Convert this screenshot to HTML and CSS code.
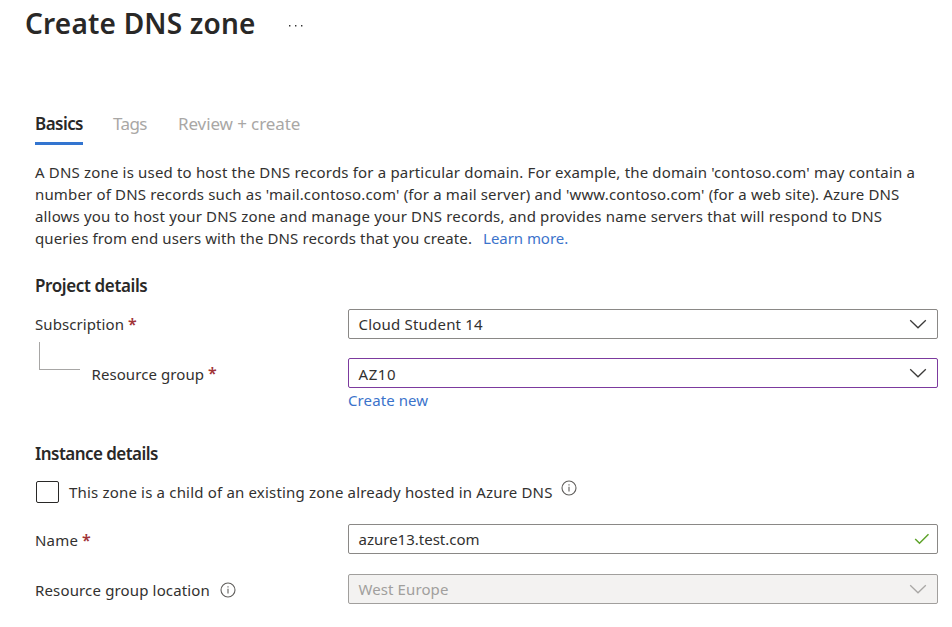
FILE: index.html
```html
<!DOCTYPE html>
<html lang="en">
<head>
<meta charset="utf-8">
<title>Create DNS zone</title>
<link rel="stylesheet" href="styles.css">
</head>
<body>
<header class="header">
  <h1 class="title"><span>Create DNS zone</span></h1>
  <svg class="more" width="16" height="4" viewBox="0 0 16 4"><path d="M1 1h1.4v1.4H1zM7 1h1.4v1.4H7zM13 1h1.4v1.4H13z" fill="#333"/></svg>
</header>
<main class="content">
  <nav class="tabs">
    <a class="tab tab-active"><span>Basics</span></a>
    <a class="tab tab-tags"><span>Tags</span></a>
    <a class="tab tab-review"><span>Review + create</span></a>
  </nav>
  <p class="intro">
    <span class="line l1">A DNS zone is used to host the DNS records for a particular domain. For example, the domain 'contoso.com' may contain a</span>
    <span class="line l2">number of DNS records such as 'mail.contoso.com' (for a mail server) and 'www.contoso.com' (for a web site). Azure DNS</span>
    <span class="line l3">allows you to host your DNS zone and manage your DNS records, and provides name servers that will respond to DNS</span>
    <span class="line l4">queries from end users with the DNS records that you create. <a class="link learn">Learn more.</a></span>
  </p>

  <section class="project">
    <h2 class="heading h-project"><span>Project details</span></h2>
    <div class="row">
      <label class="label"><span class="t-sub">Subscription</span><span class="req">*</span></label>
      <div class="field"><span class="t-cloud">Cloud Student 14</span>
        <svg class="chevron" width="18" height="10" viewBox="0 0 18 10"><path d="M1.2 1.2 9 8.8l7.800-7.600"/></svg></div>
    </div>
    <div class="row row-group">
      <label class="label label-child"><i class="branch"></i><span class="t-group">Resource group</span><span class="req">*</span></label>
      <div class="field field-focus"><span class="t-az">AZ10</span>
        <svg class="chevron" width="18" height="10" viewBox="0 0 18 10"><path d="M1.2 1.200 9 8.800l7.800-7.600"/></svg></div>
    </div>
    <a class="link create"><span>Create new</span></a>
  </section>

  <section class="instance">
    <h2 class="heading h-instance"><span>Instance details</span></h2>
    <div class="check-row">
      <i class="checkbox"></i><span class="t-check">This zone is a child of an existing zone already hosted in Azure DNS</span>
      <svg class="info info-check" width="16" height="16" viewBox="0 0 16 16"><circle cx="8" cy="8" r="7"/><path d="M8 6.800v4.700M8 4.300v1.300"/></svg>
    </div>
    <div class="row row-name">
      <label class="label"><span class="t-name">Name</span><span class="req">*</span></label>
      <div class="field"><span class="t-azure">azure13.test.com</span>
        <svg class="tick" width="16" height="12" viewBox="0 0 16 12"><path d="M1.200 6 5.500 10.300 14.500 1.300"/></svg></div>
    </div>
    <div class="row row-location">
      <label class="label"><span class="t-loc">Resource group location</span>
        <svg class="info" width="16" height="16" viewBox="0 0 16 16"><circle cx="8" cy="8" r="7"/><path d="M8 6.800v4.700M8 4.300v1.300"/></svg></label>
      <div class="field field-disabled"><span class="t-west">West Europe</span>
        <svg class="chevron" width="18" height="10" viewBox="0 0 18 10"><path d="M1.200 1.200 9 8.800l7.800-7.600"/></svg></div>
    </div>
  </section>
</main>
</body>
</html>
```
FILE: styles.css
```css
* { box-sizing: border-box; }
body {
  margin: 0;
  background: #fff;
  color: #323130;
  font: 15px/22px "Noto Sans", "Open Sans", sans-serif;
  white-space: nowrap;
  overflow: hidden;
}
svg { display: block; flex: none; fill: none; }
.header { display: flex; align-items: center; height: 47px; padding-left: 25px; }
.title { width: 263px; margin: 0; color: #292827; font-size: 28px; font-weight: 600; line-height: 47px; letter-spacing: .2px; }
.more { margin-top: 4px; }
.content { padding: 64px 14px 0 35px; }
.tabs { display: flex; gap: 30px; height: 34px; font-size: 17px; line-height: 26px; color: #a9a7a5; }
.tab-active { width: 48px; color: #292827; font-weight: 600; letter-spacing: -.55px; border-bottom: 3px solid #3375d0; }
.tab-tags { width: 35px; letter-spacing: -.6px; }
.tab-review { letter-spacing: -.1px; }
.intro { margin: 16px 0 0; }
.line { display: block; }
.l1 { letter-spacing: .172px; }
.l2 { letter-spacing: .156px; }
.l3 { letter-spacing: .168px; }
.l4 { letter-spacing: .11px; }
.link { color: #3b73cb; }
.learn { margin-left: 7px; letter-spacing: -.05px; }
.heading { margin: 0; color: #292827; font-size: 17px; font-weight: 600; line-height: 24px; }
.h-project { letter-spacing: -.38px; }
.h-instance { letter-spacing: -.54px; }
.project { padding-top: 25px; }
.row { display: grid; grid-template-columns: 313px 590px; align-items: center; height: 30px; }
.project .row { margin-top: 11px; }
.project .row-group { margin-top: 19px; }
.label { display: flex; align-items: center; }
.req { margin-left: 4px; color: #a03336; font-size: 16px; font-weight: 600; }
.t-sub { letter-spacing: .08px; }
.t-group { padding-top: 2px; letter-spacing: .08px; }
.branch { width: 41px; height: 28px; margin: -35px 11.5px 0 4px; border: solid #a7a6a5; border-width: 0 0 1px 1px; }
.field { display: flex; align-items: center; justify-content: space-between; height: 30px; padding: 0 10px 0 9.5px; border: 1px solid #8a8886; border-radius: 2px; }
.field-focus { border-color: #7c3a9e; }
.field-disabled { background: #f3f2f1; border-color: #a19f9d; color: #a19f9d; }
.t-cloud { letter-spacing: .2px; }
.t-az { padding-top: 2px; letter-spacing: .6px; }
.t-west { letter-spacing: .1px; }
.chevron { stroke: #3c3b3a; stroke-width: 1.3; }
.field-disabled .chevron { stroke: #a9a7a5; }
.tick { margin-right: -3px; stroke: #5ea32a; stroke-width: 1.5; }
.create { display: block; margin: 1px 0 0 313px; letter-spacing: .1px; }
.instance { padding-top: 31px; }
.check-row { display: flex; align-items: center; height: 24px; margin-top: 14px; }
.checkbox { width: 23px; height: 22px; margin: 0 10px 0 1px; border: 1px solid #292827; border-radius: 2px; }
.t-check { letter-spacing: .18px; }
.info { margin-left: 10px; stroke: #605e5c; stroke-width: 1.1; }
.info-check { margin: -9px 0 0 8px; }
.row-name { margin-top: 20px; }
.row-location { margin-top: 20px; }
.row-name .label, .row-location .label { padding-top: 2px; }
.t-name { letter-spacing: .2px; }
.t-loc { letter-spacing: .15px; }
```
